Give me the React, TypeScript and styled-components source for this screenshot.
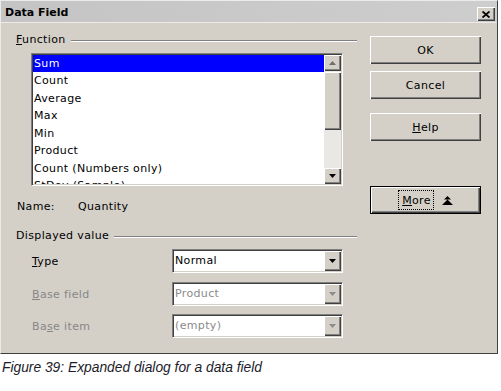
import styled, { createGlobalStyle } from "styled-components";

const GlobalStyle = createGlobalStyle`
  html, body {
    margin: 0;
    padding: 0;
    background: #ffffff;
  }
  body {
    font-family: "DejaVu Sans", Verdana, sans-serif;
  }
`;

const FACE = "#d4d0c8";

const Page = styled.div`
  width: 501px;
  height: 391px;
  display: flex;
  flex-direction: column;
  overflow: hidden;
`;

const Dialog = styled.div`
  width: 498px;
  height: 354px;
  box-sizing: border-box;
  background: ${FACE};
  border-top: 1px solid #ecebe7;
  border-left: 1px solid #ecebe7;
  border-right: 1px solid #404040;
  border-bottom: 1px solid #404040;
  display: flex;
  flex-direction: column;
`;

const TitleBar = styled.div`
  height: 21px;
  display: flex;
  justify-content: space-between;
  background: linear-gradient(to right, #c4c4c4, #cacaca 60%, #cdcdcd);
  border-bottom: 1px solid #ecebe7;
  padding-left: 4px;
`;

const TitleText = styled.div`
  font-weight: bold;
  font-size: 11px;
  line-height: 24px;
  color: #000;
`;

const CloseButton = styled.div`
  width: 18px;
  height: 14px;
  margin: 6px 2px 0 0;
  box-sizing: border-box;
  background: ${FACE};
  box-shadow: inset 1px 1px #ffffff, inset -1px -1px #404040,
    inset -2px -2px #808080;
  display: flex;
  align-items: center;
  justify-content: center;
`;

const Body = styled.div`
  flex: 1;
  display: flex;
  padding-top: 10px;
  font-size: 11px;
  letter-spacing: 0.35px;
  color: #000;
`;

const LeftCol = styled.div`
  width: 341px;
  margin-left: 15px;
  display: flex;
  flex-direction: column;
`;

const GroupHeader = styled.div<{ $top?: number }>`
  height: 14px;
  line-height: 14px;
  margin-top: ${(p) => p.$top ?? 0}px;
  display: flex;
  align-items: center;
  gap: 5px;
  white-space: nowrap;

  &::after {
    content: "";
    flex: 1;
    height: 1px;
    background: #808080;
    border-bottom: 1px solid #ffffff;
    margin-top: 1px;
  }
`;

const Sunken = styled.div`
  box-sizing: border-box;
  border: 1px solid;
  border-color: #808080 #ffffff #ffffff #808080;
  box-shadow: inset 1px 1px #404040, inset -1px -1px ${FACE};
  padding: 1px;
  background: #ffffff;
  display: flex;
`;

const ListBox = styled(Sunken)`
  margin: 6px 0 0 15px;
  width: 312px;
  height: 133px;
`;

const ListItems = styled.div`
  flex: 1;
  overflow: hidden;
`;

const ListItem = styled.div<{ $selected?: boolean }>`
  height: ${(p) => (p.$selected ? 17 : 17.5)}px;
  line-height: ${(p) => (p.$selected ? 17 : 17.5)}px;
  padding-left: 1px;
  white-space: nowrap;
  background: ${(p) => (p.$selected ? "#0000ff" : "transparent")};
  color: ${(p) => (p.$selected ? "#ffffff" : "#000000")};
`;

const ScrollBar = styled.div`
  width: 17px;
  display: flex;
  flex-direction: column;
  background: #eae8e4;
`;

const RaisedBox = styled.div<{ $h?: number; $w?: number }>`
  box-sizing: border-box;
  height: ${(p) => (p.$h ? `${p.$h}px` : "auto")};
  width: ${(p) => (p.$w ? `${p.$w}px` : "auto")};
  background: ${FACE};
  box-shadow: inset 1px 1px #ffffff, inset -1px -1px #404040,
    inset -2px -2px #808080;
  display: flex;
  align-items: center;
  justify-content: center;
  flex-shrink: 0;
`;

const Track = styled.div`
  flex: 1;
  padding-top: 1px;
`;

const NameRow = styled.div`
  margin-top: 14px;
  height: 14px;
  line-height: 14px;
  display: flex;
  padding-left: 1px;
`;

const NameLabel = styled.span`
  width: 61px;
`;

const FieldRow = styled.div<{ $top: number }>`
  margin-top: ${(p) => p.$top}px;
  display: flex;
  align-items: center;
  padding-left: 16px;
`;

const FieldLabel = styled.span<{ $disabled?: boolean }>`
  width: 140px;
  color: ${(p) => (p.$disabled ? "#878787" : "#000")};
`;

const Combo = styled(Sunken)<{ $disabled?: boolean }>`
  width: 171px;
  height: 24px;
  color: ${(p) => (p.$disabled ? "#8a8a8a" : "#000")};
`;

const ComboText = styled.div`
  flex: 1;
  padding-left: 1px;
  line-height: 20px;
`;

const RightCol = styled.div`
  width: 111px;
  margin-left: 13px;
  padding-top: 3px;
  display: flex;
  flex-direction: column;
`;

const PushButton = styled.div<{ $top?: number; $default?: boolean }>`
  height: 28px;
  margin-top: ${(p) => p.$top ?? 0}px;
  box-sizing: border-box;
  background: ${FACE};
  border: ${(p) => (p.$default ? "1px solid #000" : "none")};
  box-shadow: inset 1px 1px #ffffff, inset -1px -1px #404040,
    inset -2px -2px #808080;
  display: flex;
  align-items: center;
  justify-content: center;
  gap: 8px;
`;

const FocusRect = styled.span`
  border: 1px dotted #000;
  padding: 3px 2px 2px 3px;
  line-height: 13px;
`;

const Caption = styled.div`
  margin: 6px 0 0 2px;
  font-family: "Liberation Sans", Arial, sans-serif;
  font-style: italic;
  font-size: 13.8px;
  line-height: 16px;
  color: #1c1c2a;
`;

const Arrow = ({ up, color }: { up?: boolean; color: string }) => (
  <svg width="7" height="4" viewBox="0 0 7 4">
    <path d={up ? "M3.5 0 L7 4 L0 4 Z" : "M0 0 L7 0 L3.5 4 Z"} fill={color} />
  </svg>
);

const items = [
  "Sum",
  "Count",
  "Average",
  "Max",
  "Min",
  "Product",
  "Count (Numbers only)",
  "StDev (Sample)",
];

const fields = [
  { label: "Type", key: 0, value: "Normal", top: 6, disabled: false },
  { label: "Base field", key: 0, value: "Product", top: 9, disabled: true },
  { label: "Base item", key: 2, value: "(empty)", top: 8, disabled: true },
];

// mnemonic letter underlined, kept in one span so flex gaps don't split it
const withKey = (text: string, i: number) => (
  <span>
    {text.slice(0, i)}
    <u>{text[i]}</u>
    {text.slice(i + 1)}
  </span>
);

export default function App() {
  return (
    <Page>
      <GlobalStyle />
      <Dialog>
        <TitleBar>
          <TitleText>Data Field</TitleText>
          <CloseButton>
            <svg width="8" height="7" viewBox="0 0 8 7">
              <path d="M0.5 0.5 L7.5 6.5 M7.5 0.5 L0.5 6.5" stroke="#000" strokeWidth="1.8" />
            </svg>
          </CloseButton>
        </TitleBar>
        <Body>
          <LeftCol>
            <GroupHeader>{withKey("Function", 0)}</GroupHeader>
            <ListBox>
              <ListItems>
                {items.map((it, i) => (
                  <ListItem key={it} $selected={i === 0}>
                    {it}
                  </ListItem>
                ))}
              </ListItems>
              <ScrollBar>
                <RaisedBox $h={16}>
                  <Arrow up color="#6e6e6e" />
                </RaisedBox>
                <Track>
                  <RaisedBox $h={58} />
                </Track>
                <RaisedBox $h={16}>
                  <Arrow color="#000" />
                </RaisedBox>
              </ScrollBar>
            </ListBox>
            <NameRow>
              <NameLabel>Name:</NameLabel>
              <span>Quantity</span>
            </NameRow>
            <GroupHeader $top={15}>Displayed value</GroupHeader>
            {fields.map((f) => (
              <FieldRow key={f.label} $top={f.top}>
                <FieldLabel $disabled={f.disabled}>{withKey(f.label, f.key)}</FieldLabel>
                <Combo $disabled={f.disabled}>
                  <ComboText>{f.value}</ComboText>
                  <RaisedBox $w={17}>
                    <Arrow color={f.disabled ? "#8c8c8c" : "#000"} />
                  </RaisedBox>
                </Combo>
              </FieldRow>
            ))}
          </LeftCol>
          <RightCol>
            <PushButton>OK</PushButton>
            <PushButton $top={7}>Cancel</PushButton>
            <PushButton $top={14}>{withKey("Help", 0)}</PushButton>
            <PushButton $top={45} $default>
              <FocusRect>{withKey("More", 0)}</FocusRect>
              <svg width="11" height="9" viewBox="0 0 11 9">
                <path d="M5.5 0 L9 3.5 L2 3.5 Z M5.5 3.5 L11 9 L0 9 Z" fill="#000" />
              </svg>
            </PushButton>
          </RightCol>
        </Body>
      </Dialog>
      <Caption>Figure 39: Expanded dialog for a data field</Caption>
    </Page>
  );
}
